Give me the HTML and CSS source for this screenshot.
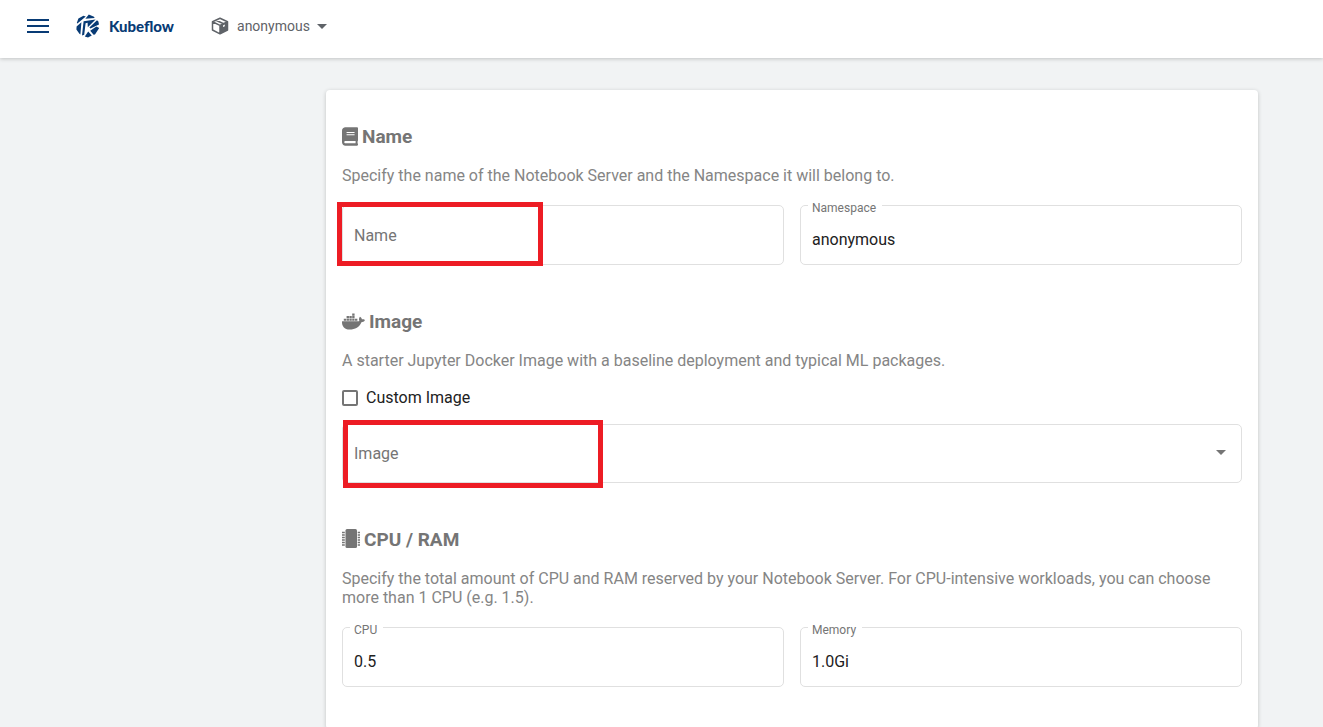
FILE: index.html
```html
<!DOCTYPE html>
<html lang="en">
<head>
<meta charset="utf-8">
<title>Kubeflow</title>
<link rel="stylesheet" href="styles.css">
</head>
<body>
<header class="toolbar">
  <button class="menu-button" type="button" aria-label="Menu"><span class="bar"></span><span class="bar"></span><span class="bar"></span></button>
  <a class="brand" href="#">
    <svg class="brand-mark" viewBox="0 0 24 24" aria-hidden="true">
      <path d="M.8 9 2.400 4.400 7.400 1.800 9.800 2.600 1.400 9.400zM9.400 4.700 12.800.4 18 2.800 18.600 3.900zM.6 12.400 5.400 8.200 4.400 20.400 3.400 19.800.4 15.600zM7.600 7.200 19.600 5.600 11.800 13.200 11.600 8.800 9.600 9.200 8.200 20.800 6 21.400zM21 6.200 22.400 7.400 23 10.400 14.400 14.400 13.400 13.600zM14.200 16.800 20.400 12.600 23.200 14 19 20.400 17.600 20.800zM8.800 22.400 12.200 17.400 15.800 21.600 12 23.600z"/>
    </svg>
    <span class="brand-name">Kubeflow</span>
  </a>
  <button class="namespace" type="button">
    <svg class="cube" viewBox="0 0 18 18" aria-hidden="true">
      <path fill="none" stroke="currentColor" stroke-width="1.5" stroke-linejoin="round" d="M9 1.2 16.5 4.8V13L9 16.8 1.5 13V4.8zM1.5 4.8 9 8.4 16.5 4.8M9 8.4V16.8M5 3.2 12.6 6.8"/>
      <path d="M9 8.4 16.5 4.8V13L9 16.8z"/><path fill="#fff" d="M12 8.4 13.8 7.5V9.2L12 10.1z"/>
    </svg>
    <span>anonymous</span><span class="caret"></span>
  </button>
</header>
<main class="page">
  <form class="card">
    <section class="section">
      <h3 class="title"><svg class="icon-book" viewBox="0 0 448 512" aria-hidden="true"><path d="M448 360V24c0-13.3-10.7-24-24-24H96C43 0 0 43 0 96v320c0 53 43 96 96 96h328c13.3 0 24-10.7 24-24v-16c0-7.5-3.5-14.3-8.9-18.7-4.2-15.4-4.2-59.3 0-74.7 5.4-4.3 8.9-11.1 8.9-18.6zM128 134c0-3.3 2.7-6 6-6h212c3.3 0 6 2.7 6 6v20c0 3.3-2.7 6-6 6H134c-3.3 0-6-2.7-6-6v-20zm0 64c0-3.3 2.7-6 6-6h212c3.3 0 6 2.7 6 6v20c0 3.3-2.7 6-6 6H134c-3.3 0-6-2.7-6-6v-20zm253.4 250H96c-17.7 0-32-14.3-32-32 0-17.6 14.4-32 32-32h285.4c-1.9 17.1-1.9 46.9 0 64z"/></svg>Name</h3>
      <p class="hint">Specify the name of the Notebook Server and the Namespace it will belong to.</p>
      <div class="row">
        <div class="field">
          <input class="control" id="name" type="text" placeholder="Name" aria-label="Name">
          <span class="highlight highlight-name"></span>
        </div>
        <div class="field">
          <label class="label" for="namespace">Namespace</label>
          <input class="control floated" id="namespace" type="text" value="anonymous">
        </div>
      </div>
    </section>
    <section class="section">
      <h3 class="title"><svg class="icon-docker" viewBox="0 0 640 512" aria-hidden="true"><path d="M349.9 236.3h-66.1v-59.4h66.1v59.4zm0-204.3h-66.1v60.7h66.1V32zm78.2 144.8H362v59.4h66.1v-59.4zm-156.3-72.1h-66.1v60.1h66.1v-60.1zm78.1 0h-66.1v60.1h66.1v-60.1zm276.8 100c-14.4-9.7-47.6-13.2-73.1-8.4-3.3-24-16.7-44.9-41.1-63.7l-14-9.3-9.3 14c-18.4 27.8-23.4 73.6-3.7 103.8-8.7 4.7-25.8 11.1-48.4 10.7H2.4c-8.7 50.8 5.8 116.8 44 162.1 37.1 43.9 92.7 66.2 165.4 66.2 157.4 0 273.9-72.5 328.4-204.2 21.4.4 67.6.1 91.3-45.2 1.5-2.5 6.6-13.2 8.5-17.1l-13.3-8.9zm-511.1-27.9h-66v59.4h66.1v-59.4zm78.1 0h-66.1v59.4h66.1v-59.4zm78.1 0h-66.1v59.4h66.1v-59.4zm-78.1-72.1h-66.1v60.1h66.1v-60.1z"/></svg>Image</h3>
      <p class="hint">A starter Jupyter Docker Image with a baseline deployment and typical ML packages.</p>
      <label class="check"><input class="check-box" type="checkbox">Custom Image</label>
      <div class="field">
        <select class="control select" id="image" aria-label="Image"><option>Image</option></select>
        <span class="caret select-caret"></span>
        <span class="highlight highlight-image"></span>
      </div>
    </section>
    <section class="section">
      <h3 class="title"><svg class="icon-chip" viewBox="0 0 18 20" aria-hidden="true"><rect x="3.5" y="0" width="11.500" height="19" rx="1.5"/><path fill="none" stroke="currentColor" stroke-width="1.4" d="M0 3.500h2.800M0 6h2.800M0 8.500h2.800M0 11h2.800M0 13.500h2.800M0 16h2.800M15.700 3.500h2.300M15.700 6h2.300M15.700 8.500h2.300M15.700 11h2.300M15.700 13.500h2.300M15.700 16h2.300"/></svg>CPU / RAM</h3>
      <p class="hint">Specify the total amount of CPU and RAM reserved by your Notebook Server. For CPU-intensive workloads, you can choose more than 1 CPU (e.g. 1.5).</p>
      <div class="row">
        <div class="field">
          <label class="label" for="cpu">CPU</label>
          <input class="control floated" id="cpu" type="text" value="0.5">
        </div>
        <div class="field">
          <label class="label" for="memory">Memory</label>
          <input class="control floated" id="memory" type="text" value="1.0Gi">
        </div>
      </div>
    </section>
  </form>
</main>
</body>
</html>
```

FILE: styles.css
```css
* { box-sizing: border-box; }
body {
  margin: 0;
  height: 100vh;
  overflow: hidden;
  display: flex;
  flex-direction: column;
  background: #f1f3f4;
  color: #212121;
  font: 16px/19px Roboto, sans-serif;
}
button, input, select { font: inherit; color: inherit; margin: 0; }
button { border: 0; background: none; padding: 0; }
svg { fill: currentColor; flex: none; }

.toolbar {
  flex: none;
  display: flex;
  align-items: center;
  height: 58px;
  padding: 0 27px 6px;
  background: #fff;
  box-shadow: 0 1px 4px rgba(0, 0, 0, .2);
  z-index: 1;
}
.menu-button { display: flex; flex-direction: column; gap: 4px; width: 22px; color: #083b75; }
.bar { height: 2px; width: 100%; background: currentColor; }
.brand { display: flex; align-items: center; gap: 9px; margin-left: 27px; color: #083b75; text-decoration: none; }
.brand-mark { width: 24px; height: 24px; }
.brand-name { font: 900 15px/20px Lato, sans-serif; }
.namespace { display: flex; align-items: center; margin-left: 37px; color: #5f6368; font-size: 14px; }
.cube { width: 18px; height: 18px; margin-right: 8px; }
.caret { border: 5px solid transparent; border-top-color: currentColor; border-bottom: 0; margin-left: 7px; }

.page { flex: 1; padding: 32px 65px 0 326px; }
.card {
  padding: 16px;
  background: #fff;
  border-radius: 4px;
  box-shadow: 0 1px 4px rgba(0, 0, 0, .2);
}
.section { padding-top: 19px; margin-bottom: 26px; }
.title {
  display: flex;
  align-items: center;
  gap: 4px;
  height: 22px;
  margin: 0 0 19px;
  color: #757575;
  font-size: 19px;
  font-weight: 700;
}
.icon-book { width: 16px; height: 19px; }
.icon-docker { width: 23px; height: 19px; }
.icon-chip { width: 18px; height: 20px; }
.hint { margin: 0 0 20px; color: #858585; }
.row { display: grid; grid-template-columns: 1fr 1fr; gap: 16px; }
.field { position: relative; }
.control {
  display: block;
  width: 100%;
  height: 60px;
  padding: 0 11px;
  border: 1px solid #e0e0e0;
  border-radius: 5px;
  background: #fff;
  outline: 0;
}
.control::placeholder { color: #757575; opacity: 1; }
.floated { padding-top: 8px; }
.label {
  position: absolute;
  top: -4px;
  left: 8px;
  padding: 0 6px 0 4px;
  background: #fff;
  color: #757575;
  font-size: 12px;
  line-height: 14px;
}
.select { height: 59px; appearance: none; color: #757575; }
.select-caret { position: absolute; right: 16px; top: 26px; color: #757575; pointer-events: none; }
.check { display: flex; align-items: center; gap: 8px; margin: -2px 0 17px; }
.check-box {
  appearance: none;
  width: 16px;
  height: 16px;
  border: 2px solid #757575;
  border-radius: 2px;
}
.highlight { position: absolute; border: 5px solid #ed1c24; pointer-events: none; }
.highlight-name { left: -5px; top: -3px; width: 206px; height: 64px; }
.highlight-image { left: 1px; top: -4px; width: 260px; height: 68px; }
```
